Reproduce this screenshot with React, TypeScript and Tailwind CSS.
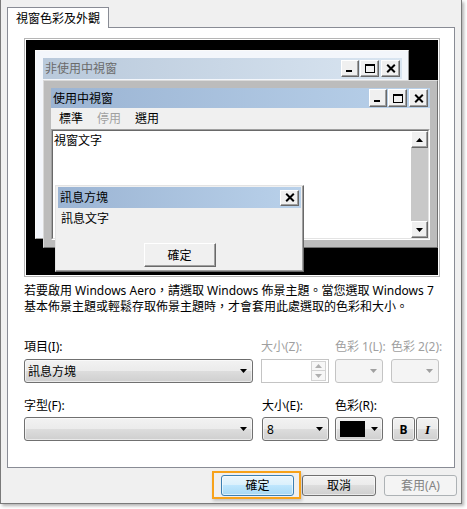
import React from "react";

function MinGlyph() {
  return (
    <svg width="10" height="9" viewBox="0 0 10 9">
      <rect x="1" y="6" width="6" height="2" fill="#000" />
    </svg>
  );
}
function MaxGlyph() {
  return (
    <svg width="10" height="9" viewBox="0 0 10 9">
      <rect x="0.5" y="0.5" width="9" height="8" fill="none" stroke="#000" />
      <rect x="0" y="0" width="10" height="2" fill="#000" />
    </svg>
  );
}
function CloseGlyph() {
  return (
    <svg width="10" height="9" viewBox="0 0 10 9">
      <path d="M1.2 0.8 L8.8 8.2 M8.8 0.8 L1.2 8.2" stroke="#000" strokeWidth="2" />
    </svg>
  );
}
function Down({ color = "#000" }: { color?: string }) {
  return (
    <svg width="7" height="4" viewBox="0 0 7 4">
      <path d="M0 0H7L3.5 4Z" fill={color} />
    </svg>
  );
}
function Up({ color = "#000" }: { color?: string }) {
  return (
    <svg width="7" height="4" viewBox="0 0 7 4">
      <path d="M0 4H7L3.5 0Z" fill={color} />
    </svg>
  );
}

export default function App() {
  return (
    <div className="w-[467px] h-[509px] bg-white font-['Noto_Sans','Noto_Sans_CJK_TC',sans-serif] text-[12px] leading-[15px] text-black">
      <div className="w-[462px] h-[504px] bg-[#f0f0f0] border-x border-b border-[#7a7a7a] shadow-[2px_2px_3px_rgba(0,0,0,0.3)] flex flex-col">
        {/* tab header */}
        <div className="pt-[7px] pl-[6px] flex">
          <div className="relative z-10 h-[21px] flex items-center px-[8px] border border-b-0 border-[#898c95] bg-white whitespace-nowrap">
            視窗色彩及外觀
          </div>
        </div>
        {/* tab panel */}
        <div className="-mt-px ml-[6px] w-[448px] h-[441px] border border-[#898c95] bg-white pl-[16px] pt-[10px] flex flex-col">
          {/* preview */}
          <div className="w-[416px] h-[239px] border border-[#b5b5b5] p-px bg-white">
            <div className="relative w-full h-full bg-black overflow-hidden">
              {/* inactive window */}
              <div className="absolute left-[9px] top-[10px] w-[374px] h-[189px] bg-[#f3f6fb] border border-t-[#fafafa] border-l-[#fafafa] border-r-[#9a9a9a] border-b-[#9a9a9a] pl-[7px] pt-[7px] pr-[6px]">
                <div className="h-[21px] flex items-center justify-between bg-[linear-gradient(to_right,#b9c9db,#d9e5f1)]">
                  <span className="pl-[2px] text-[#6b6b6b] whitespace-nowrap">非使用中視窗</span>
                  <div className="flex items-center pr-[2px]">
                    <div className="w-[18px] h-[17px] flex items-center justify-center bg-[#f0f0f0] border border-t-white border-l-white border-r-[#696969] border-b-[#696969] shadow-[inset_-1px_-1px_0_#a0a0a0]">
                      <MinGlyph />
                    </div>
                    <div className="ml-[1px] w-[19px] h-[17px] flex items-center justify-center bg-[#f0f0f0] border border-t-white border-l-white border-r-[#696969] border-b-[#696969] shadow-[inset_-1px_-1px_0_#a0a0a0]">
                      <MaxGlyph />
                    </div>
                    <div className="ml-[2px] w-[19px] h-[17px] flex items-center justify-center bg-[#f0f0f0] border border-t-white border-l-white border-r-[#696969] border-b-[#696969] shadow-[inset_-1px_-1px_0_#a0a0a0]">
                      <CloseGlyph />
                    </div>
                  </div>
                </div>
              </div>

              {/* active window */}
              <div className="absolute left-[17px] top-[40px] w-[395px] h-[168px] bg-[#bcbcbc] border border-t-[#dadada] border-l-[#dadada] border-r-[#707070] border-b-[#707070] p-[7px] flex flex-col">
                <div className="h-[20px] shrink-0 flex items-center justify-between bg-[linear-gradient(to_right,#9bb4d3,#b9d1ea)]">
                  <span className="pl-[2px] whitespace-nowrap">使用中視窗</span>
                  <div className="flex items-center pr-[2px]">
                    <div className="w-[18px] h-[18px] flex items-center justify-center bg-[#f0f0f0] border border-t-white border-l-white border-r-[#696969] border-b-[#696969] shadow-[inset_-1px_-1px_0_#a0a0a0]">
                      <MinGlyph />
                    </div>
                    <div className="ml-[1px] w-[19px] h-[18px] flex items-center justify-center bg-[#f0f0f0] border border-t-white border-l-white border-r-[#696969] border-b-[#696969] shadow-[inset_-1px_-1px_0_#a0a0a0]">
                      <MaxGlyph />
                    </div>
                    <div className="ml-[2px] w-[19px] h-[18px] flex items-center justify-center bg-[#f0f0f0] border border-t-white border-l-white border-r-[#696969] border-b-[#696969] shadow-[inset_-1px_-1px_0_#a0a0a0]">
                      <CloseGlyph />
                    </div>
                  </div>
                </div>
                <div className="h-[21px] shrink-0 flex items-center bg-[#f0f0f0] pl-[1px] whitespace-nowrap">
                  <span className="px-[7px]">標準</span>
                  <span className="px-[7px] text-[#a0a0a0]">停用</span>
                  <span className="px-[7px]">選用</span>
                </div>
                <div className="flex-1 flex border border-t-[#a0a0a0] border-l-[#a0a0a0] border-r-white border-b-white">
                  <div className="flex-1 flex border border-t-[#696969] border-l-[#696969] border-r-[#e3e3e3] border-b-[#e3e3e3] bg-white">
                    <div className="flex-1 pl-[1px] pt-[2px] whitespace-nowrap">視窗文字</div>
                    <div className="w-[17px] bg-[#c8c8c8] flex flex-col justify-between">
                      <div className="h-[17px] flex items-center justify-center bg-[#f0f0f0] border border-t-white border-l-white border-r-[#696969] border-b-[#696969] shadow-[inset_-1px_-1px_0_#a0a0a0]">
                        <Up />
                      </div>
                      <div className="h-[17px] flex items-center justify-center bg-[#f0f0f0] border border-t-white border-l-white border-r-[#696969] border-b-[#696969] shadow-[inset_-1px_-1px_0_#a0a0a0]">
                        <Down />
                      </div>
                    </div>
                  </div>
                </div>
              </div>

              {/* message box */}
              <div className="absolute left-[29px] top-[145px] w-[249px] h-[87px] bg-[#f0f0f0] border border-t-[#e3e3e3] border-l-[#e3e3e3] border-r-[#696969] border-b-[#696969] shadow-[inset_-1px_-1px_0_#a0a0a0] px-[2px] pt-[1px] flex flex-col">
                <div className="h-[21px] shrink-0 flex items-center justify-between bg-[linear-gradient(to_right,#9bb4d3,#b9d1ea)]">
                  <span className="pl-[2px] whitespace-nowrap">訊息方塊</span>
                  <div className="mr-[2px] w-[19px] h-[16px] flex items-center justify-center bg-[#f0f0f0] border border-t-white border-l-white border-r-[#696969] border-b-[#696969] shadow-[inset_-1px_-1px_0_#a0a0a0]">
                    <CloseGlyph />
                  </div>
                </div>
                <div className="pl-[3px] pt-[3px] whitespace-nowrap">訊息文字</div>
                <div className="mt-auto mb-[4px] self-center w-[72px] h-[24px] flex items-center justify-center bg-[#f0f0f0] border border-t-white border-l-white border-r-[#696969] border-b-[#696969] shadow-[inset_-1px_-1px_0_#a0a0a0]">
                  確定
                </div>
              </div>
            </div>
          </div>

          {/* info text */}
          <div className="mt-[6px] leading-[16px] whitespace-nowrap">
            <div>若要啟用 Windows Aero，請選取 Windows 佈景主題。當您選取 Windows 7</div>
            <div>基本佈景主題或輕鬆存取佈景主題時，才會套用此處選取的色彩和大小。</div>
          </div>

          {/* labels row 1 */}
          <div className="mt-[24px] h-[15px] flex whitespace-nowrap">
            <div className="w-[229px]">項目(I):</div>
            <div className="ml-[8px] w-[68px] text-[#a0a0a0]">大小(Z):</div>
            <div className="ml-[6px] w-[48px] text-[#a0a0a0]">色彩 1(L):</div>
            <div className="ml-[8px] w-[48px] text-[#a0a0a0]">色彩 2(2):</div>
          </div>
          {/* controls row 1 */}
          <div className="mt-[5px] h-[24px] flex">
            <div className="w-[229px] h-full flex items-center justify-between pl-[3px] pr-[5px] rounded-[3px] border border-[#707070] bg-[linear-gradient(to_bottom,#f2f2f2_0%,#ebebeb_50%,#dddddd_50%,#cfcfcf_100%)] shadow-[inset_0_0_0_1px_rgba(255,255,255,0.55)] whitespace-nowrap">
              <span>訊息方塊</span>
              <Down />
            </div>
            <div className="ml-[8px] w-[68px] h-full flex justify-end items-center pr-[2px] border border-[#c4c4c4] bg-white">
              <div className="w-[15px] h-[20px] flex flex-col">
                <div className="h-[10px] flex items-center justify-center border border-[#d3d3d3] bg-[#f7f7f7]">
                  <Up color="#b0b0b0" />
                </div>
                <div className="h-[10px] flex items-center justify-center border border-t-0 border-[#d3d3d3] bg-[#f7f7f7]">
                  <Down color="#b0b0b0" />
                </div>
              </div>
            </div>
            <div className="ml-[6px] w-[48px] h-full flex items-center justify-end pr-[5px] rounded-[3px] border border-[#c4c4c4] bg-[#f4f4f4]">
              <Down color="#a0a0a0" />
            </div>
            <div className="ml-[8px] w-[48px] h-full flex items-center justify-end pr-[5px] rounded-[3px] border border-[#c4c4c4] bg-[#f4f4f4]">
              <Down color="#a0a0a0" />
            </div>
          </div>

          {/* labels row 2 */}
          <div className="mt-[15px] h-[15px] flex whitespace-nowrap">
            <div className="w-[229px]">字型(F):</div>
            <div className="ml-[9px] w-[67px]">大小(E):</div>
            <div className="ml-[6px] w-[48px]">色彩(R):</div>
          </div>
          {/* controls row 2 */}
          <div className="mt-[4px] h-[24px] flex">
            <div className="w-[229px] h-full flex items-center justify-end pr-[5px] rounded-[3px] border border-[#707070] bg-[linear-gradient(to_bottom,#f2f2f2_0%,#ebebeb_50%,#dddddd_50%,#cfcfcf_100%)] shadow-[inset_0_0_0_1px_rgba(255,255,255,0.55)]">
              <Down />
            </div>
            <div className="ml-[9px] w-[67px] h-full flex items-center justify-between pl-[4px] pr-[5px] rounded-[3px] border border-[#707070] bg-[linear-gradient(to_bottom,#f2f2f2_0%,#ebebeb_50%,#dddddd_50%,#cfcfcf_100%)] shadow-[inset_0_0_0_1px_rgba(255,255,255,0.55)]">
              <span>8</span>
              <Down />
            </div>
            <div className="ml-[6px] w-[48px] h-full flex items-center justify-between pl-[4px] pr-[4px] rounded-[3px] border border-[#707070] bg-[linear-gradient(to_bottom,#f2f2f2_0%,#ebebeb_50%,#dddddd_50%,#cfcfcf_100%)] shadow-[inset_0_0_0_1px_rgba(255,255,255,0.55)]">
              <div className="w-[25px] h-[16px] bg-black" />
              <Down />
            </div>
            <div className="ml-[9px] w-[23px] h-full flex items-center justify-center rounded-[3px] border border-[#707070] bg-[linear-gradient(to_bottom,#f2f2f2_0%,#ebebeb_50%,#dddddd_50%,#cfcfcf_100%)] shadow-[inset_0_0_0_1px_rgba(255,255,255,0.55)] font-bold">
              B
            </div>
            <div className="ml-[1px] w-[23px] h-full flex items-center justify-center rounded-[3px] border border-[#707070] bg-[linear-gradient(to_bottom,#f2f2f2_0%,#ebebeb_50%,#dddddd_50%,#cfcfcf_100%)] shadow-[inset_0_0_0_1px_rgba(255,255,255,0.55)] font-['Liberation_Serif',serif] italic font-bold text-[13px]">
              I
            </div>
          </div>
        </div>

        {/* bottom buttons */}
        <div className="mt-[7px] flex justify-end gap-[8px] pr-[4px]">
          <div className="relative w-[73px] h-[21px] flex items-center justify-center rounded-[3px] border border-[#3c7fb1] bg-[linear-gradient(to_bottom,#eaf6fd_0%,#d9f0fc_50%,#bee6fd_50%,#a7d9f5_100%)] shadow-[inset_0_0_0_1px_rgba(255,255,255,0.6)]">
            確定
            <div className="absolute -left-[10px] -top-[5px] -right-[8px] -bottom-[4px] border-2 border-[#f7a21a] shadow-[1px_2px_3px_rgba(0,0,0,0.2)]" />
          </div>
          <div className="w-[74px] h-[21px] flex items-center justify-center rounded-[3px] border border-[#707070] bg-[linear-gradient(to_bottom,#f2f2f2_0%,#ebebeb_50%,#dddddd_50%,#cfcfcf_100%)] shadow-[inset_0_0_0_1px_rgba(255,255,255,0.55)]">
            取消
          </div>
          <div className="w-[73px] h-[21px] flex items-center justify-center rounded-[3px] border border-[#adb2b5] bg-[#f4f4f4] text-[#838383]">
            套用(A)
          </div>
        </div>
      </div>
    </div>
  );
}
